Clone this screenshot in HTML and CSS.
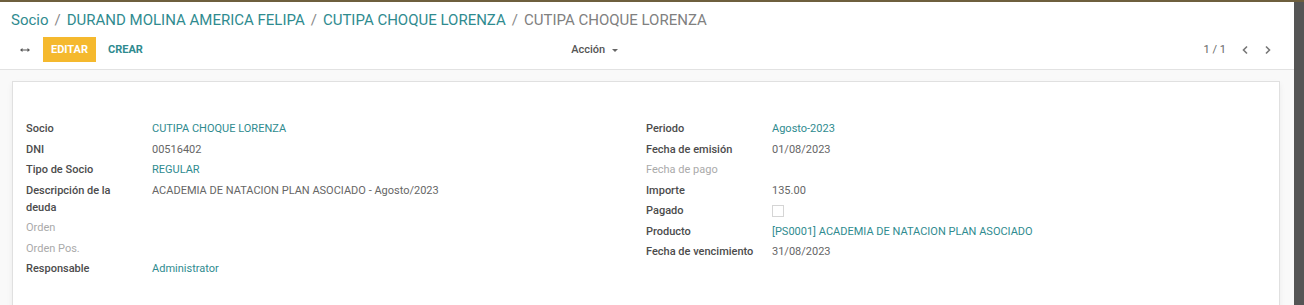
FILE: index.html
```html
<!DOCTYPE html>
<html lang="es">
  <head>
    <meta charset="UTF-8" />
    <title>Socio - Deuda</title>
    <link rel="stylesheet" href="styles.css">
  </head>
  <body>
    <div class="app">
      <div class="main">
        <div class="control-panel">
          <ol class="breadcrumb">
            <li><a href="#">Socio</a></li>
            <li class="sep">/</li>
            <li><a href="#">DURAND MOLINA AMERICA FELIPA</a></li>
            <li class="sep">/</li>
            <li><a href="#">CUTIPA CHOQUE LORENZA</a></li>
            <li class="sep">/</li>
            <li class="active">CUTIPA CHOQUE LORENZA</li>
          </ol>
          <div class="cp-bottom">
            <div class="cp-left">
              <span class="expand">
                <svg width="10" height="6" viewBox="0 0 10 6"><path d="M0 3 L2.5 1 L2.5 2.4 L7.5 2.4 L7.5 1 L10 3 L7.5 5 L7.5 3.6 L2.5 3.6 L2.5 5 Z" fill="#555"/></svg>
              </span>
              <button class="btn btn-edit">EDITAR</button>
              <button class="btn btn-create">CREAR</button>
            </div>
            <div class="cp-center">
              <span class="action">Acción <span class="caret"></span></span>
            </div>
            <div class="cp-right">
              <span class="pager">1 / 1</span>
              <span class="chev">
                <svg width="8" height="10" viewBox="0 0 8 10"><path d="M6 1.5 L2.5 5 L6 8.5" stroke="#777" stroke-width="1.6" fill="none"/></svg>
              </span>
              <span class="chev">
                <svg width="8" height="10" viewBox="0 0 8 10"><path d="M2 1.5 L5.5 5 L2 8.5" stroke="#777" stroke-width="1.6" fill="none"/></svg>
              </span>
            </div>
          </div>
        </div>

        <div class="content">
          <div class="sheet">
            <div class="group">
              <div class="field"><div class="label">Socio</div><div class="value link">CUTIPA CHOQUE LORENZA</div></div>
              <div class="field"><div class="label">DNI</div><div class="value">00516402</div></div>
              <div class="field"><div class="label">Tipo de Socio</div><div class="value link">REGULAR</div></div>
              <div class="field"><div class="label">Descripción de la deuda</div><div class="value">ACADEMIA DE NATACION PLAN ASOCIADO - Agosto/2023</div></div>
              <div class="field"><div class="label muted">Orden</div><div class="value"></div></div>
              <div class="field"><div class="label muted">Orden Pos.</div><div class="value"></div></div>
              <div class="field"><div class="label">Responsable</div><div class="value link">Administrator</div></div>
            </div>
            <div class="group">
              <div class="field"><div class="label">Periodo</div><div class="value link">Agosto-2023</div></div>
              <div class="field"><div class="label">Fecha de emisión</div><div class="value">01/08/2023</div></div>
              <div class="field"><div class="label muted">Fecha de pago</div><div class="value"></div></div>
              <div class="field"><div class="label">Importe</div><div class="value">135.00</div></div>
              <div class="field"><div class="label">Pagado</div><div class="value"><span class="checkbox"></span></div></div>
              <div class="field"><div class="label">Producto</div><div class="value link">[PS0001] ACADEMIA DE NATACION PLAN ASOCIADO</div></div>
              <div class="field"><div class="label">Fecha de vencimiento</div><div class="value">31/08/2023</div></div>
            </div>
          </div>
        </div>
      </div>
      <div class="side-strip"></div>
    </div>
  </body>
</html>
```

FILE: styles.css
```css
html, body {
  margin: 0;
  height: 100%;
}

body {
  font-family: Roboto, "Liberation Sans", sans-serif;
  font-size: 11px;
  color: #666;
  overflow: hidden;
}

.app {
  display: flex;
  height: 100%;
  border-top: 2px solid #6e5f3e;
  box-sizing: border-box;
}

.main {
  flex: 1;
  display: flex;
  flex-direction: column;
  background-color: #f9f9f9;
  overflow: hidden;
}

.side-strip {
  width: 10px;
  background-color: #555;
}

/* control panel */
.control-panel {
  background-color: #fff;
  border-bottom: 1px solid #e2e2e2;
  padding: 6px 22px 7px 11px;
}

.breadcrumb {
  list-style: none;
  margin: 0;
  padding: 0;
  display: flex;
  gap: 6px;
  font-size: 15px;
  line-height: 24px;
}

.breadcrumb a {
  color: #2f8b8f;
  text-decoration: none;
}

.breadcrumb .sep {
  color: #888;
}

.breadcrumb .active {
  color: #808080;
}

.cp-bottom {
  display: flex;
  align-items: center;
  margin-top: 5px;
  height: 25px;
}

.cp-left {
  flex: 1;
  display: flex;
  align-items: center;
}

.cp-center {
  flex: 1;
  display: flex;
  justify-content: center;
}

.cp-right {
  flex: 1;
  display: flex;
  justify-content: flex-end;
  align-items: center;
  gap: 15px;
}

.expand {
  display: flex;
  margin-left: 9px;
  margin-right: 13px;
}

.btn {
  font-family: Roboto, "Liberation Sans", sans-serif;
  font-size: 11px;
  font-weight: bold;
  border: none;
  height: 25px;
  cursor: pointer;
}

.btn-edit {
  background-color: #f5b92e;
  color: #fff;
  width: 53px;
  padding: 0;
}

.btn-create {
  background: none;
  color: #2f8b8f;
  padding: 0 12px;
}

.action {
  color: #555;
  font-size: 11px;
  font-weight: 500;
  margin-right: 94px;
}

.caret {
  display: inline-block;
  width: 0;
  height: 0;
  border-left: 3px solid transparent;
  border-right: 3px solid transparent;
  border-top: 3px solid #666;
  vertical-align: middle;
  margin-left: 4px;
}

.pager {
  color: #666;
  font-size: 11px;
}

.chev {
  display: flex;
}

/* form sheet */
.content {
  padding: 11px 14px 0 12px;
  flex: 1;
}

.sheet {
  background-color: #fff;
  border: 1px solid #e0e0e0;
  box-shadow: 0 3px 6px rgba(0, 0, 0, 0.06);
  padding: 36px 14px 20px 13px;
  min-height: 260px;
  box-sizing: border-box;
  display: grid;
  grid-template-columns: 620px 1fr;
  align-content: start;
}

.field {
  display: grid;
  grid-template-columns: 126px 1fr;
  line-height: 17px;
  padding: 2px 0 1.5px 0;
}

.label {
  font-weight: 500;
  color: #4c4c4c;
  padding-right: 14px;
}

.label.muted {
  color: #aaa;
  font-weight: 400;
}

.value {
  color: #666;
}

.value.link {
  color: #2f8b8f;
}

.checkbox {
  display: inline-block;
  width: 10px;
  height: 10px;
  border: 1px solid #d5d5d5;
  vertical-align: middle;
}
```
